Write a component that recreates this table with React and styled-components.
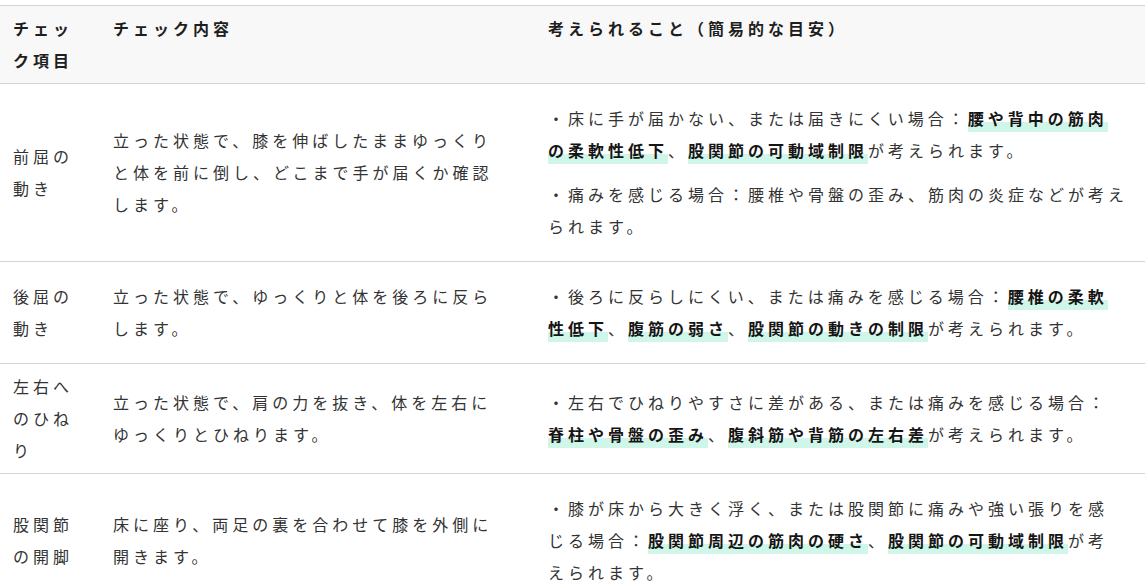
import React from "react"
import styled, { createGlobalStyle } from "styled-components"

const GlobalStyle = createGlobalStyle`
  body {
    margin: 0;
    background: #fff;
    font-family: "Noto Sans CJK JP", "Noto Sans", sans-serif;
    color: #333;
  }
`

const Wrapper = styled.div`
  padding-top: 5px;
  width: 1145px;
  overflow: hidden;
`

const Table = styled.table`
  width: 1145px;
  border-collapse: collapse;
  table-layout: fixed;
  font-size: 16px;
  line-height: 2;
  letter-spacing: 4px;
`

const HeadCell = styled.th`
  text-align: left;
  vertical-align: top;
  background: #f8f8f8;
  padding: 6px ${(p) => p.$pr || 13}px 7px 13px;
  border-top: 1px solid #d4d4d4;
  border-bottom: 1px solid #d4d4d4;
  font-weight: 700;
  color: #1e1e1e;
`

const Cell = styled.td`
  vertical-align: middle;
  padding: 6px ${(p) => p.$pr || 13}px 7px 13px;
  border-bottom: 1px solid #d4d4d4;
`

// some lines run a few px past the column edge in the original
const Para = styled.p`
  margin: 12px ${(p) => (p.$wide ? "-6px" : "0")} 12px 0;
`

const Mark = styled.strong`
  font-weight: 700;
  color: #151515;
  padding-bottom: 2px;
  background: linear-gradient(transparent 60%, #cff6e8 60%);
`

const rows = [
  {
    item: "前屈の動き",
    how: "立った状態で、膝を伸ばしたままゆっくりと体を前に倒し、どこまで手が届くか確認します。",
    notes: [
      ["・床に手が届かない、または届きにくい場合：", <Mark key="a">腰や背中の筋肉の柔軟性低下</Mark>, "、", <Mark key="b">股関節の可動域制限</Mark>, "が考えられます。"],
      ["・痛みを感じる場合：腰椎や骨盤の歪み、筋肉の炎症などが考えられます。"],
    ],
    wide: [false, true],
  },
  {
    item: "後屈の動き",
    how: "立った状態で、ゆっくりと体を後ろに反らします。",
    notes: [
      ["・後ろに反らしにくい、または痛みを感じる場合：", <Mark key="a">腰椎の柔軟性低下</Mark>, "、", <Mark key="b">腹筋の弱さ</Mark>, "、", <Mark key="c">股関節の動きの制限</Mark>, "が考えられます。"],
    ],
  },
  {
    item: "左右へのひねり",
    how: "立った状態で、肩の力を抜き、体を左右にゆっくりとひねります。",
    notes: [
      ["・左右でひねりやすさに差がある、または痛みを感じる場合：", <Mark key="a">脊柱や骨盤の歪み</Mark>, "、", <Mark key="b">腹斜筋や背筋の左右差</Mark>, "が考えられます。"],
    ],
  },
  {
    item: "股関節の開脚",
    how: "床に座り、両足の裏を合わせて膝を外側に開きます。",
    notes: [
      ["・膝が床から大きく浮く、または股関節に痛みや強い張りを感じる場合：", <Mark key="a">股関節周辺の筋肉の硬さ</Mark>, "、", <Mark key="b">股関節の可動域制限</Mark>, "が考えられます。"],
    ],
  },
]

export default function App() {
  return (
    <Wrapper>
      <GlobalStyle />
      <Table>
        <colgroup>
          <col style={{ width: 100 }} />
          <col style={{ width: 435 }} />
          <col />
        </colgroup>
        <thead>
          <tr>
            <HeadCell>チェック項目</HeadCell>
            <HeadCell $pr={32}>チェック内容</HeadCell>
            <HeadCell $pr={19}>考えられること（簡易的な目安）</HeadCell>
          </tr>
        </thead>
        <tbody>
          {rows.map((r) => (
            <tr key={r.item}>
              <Cell>{r.item}</Cell>
              <Cell $pr={32}>{r.how}</Cell>
              <Cell $pr={19}>
                {r.notes.map((n, i) => (
                  <Para key={i} $wide={r.wide && r.wide[i]}>{n}</Para>
                ))}
              </Cell>
            </tr>
          ))}
        </tbody>
      </Table>
    </Wrapper>
  )
}
